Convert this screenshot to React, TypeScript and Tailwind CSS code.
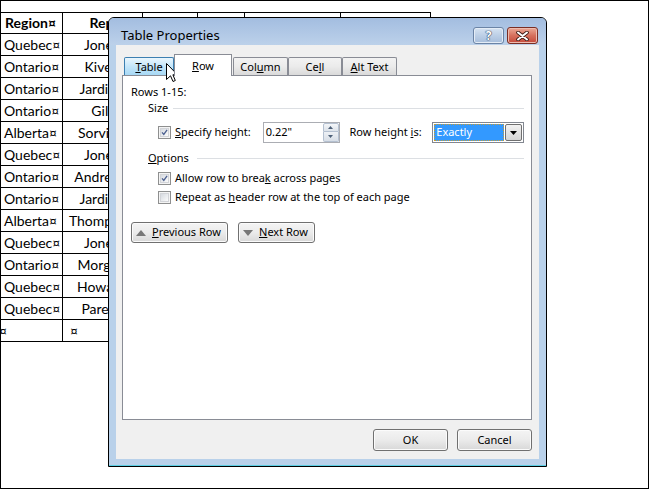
import React from "react";

const rows: [string, string][] = [
  ["Quebec", "Jones"],
  ["Ontario", "Kivell"],
  ["Ontario", "Jardine"],
  ["Ontario", "Gill"],
  ["Alberta", "Sorvino"],
  ["Quebec", "Jones"],
  ["Ontario", "Andrews"],
  ["Ontario", "Jardine"],
  ["Alberta", "Thompson"],
  ["Quebec", "Jones"],
  ["Ontario", "Morgan"],
  ["Quebec", "Howard"],
  ["Quebec", "Parent"],
];

function Check({ checked }: { checked?: boolean }) {
  return (
    <div className="flex h-[13px] w-[13px] shrink-0 items-center justify-center border border-[#8e8f8f] bg-[#f4f4f4]">
      <div className="flex h-[9px] w-[9px] items-center justify-center border border-[#d2d4d8] bg-gradient-to-br from-[#d6dae0] to-[#fbfbfb]">
        {checked && (
          <svg width="9" height="9" viewBox="0 0 9 9">
            <path d="M1.3 4.3 L3.6 6.9 L7.8 1.2" fill="none" stroke="#4b5f8f" strokeWidth="1.7" />
          </svg>
        )}
      </div>
    </div>
  );
}

const btn =
  "flex h-[21px] items-center rounded-[3px] border border-[#707070] bg-gradient-to-b from-[#f4f4f4] via-[#ebebeb] to-[#d8d8d8] shadow-[inset_0_0_0_1px_#fbfbfb]";

const tabIdle =
  "flex h-[18px] items-center justify-center rounded-t-[2px] border border-b-0 border-[#898c95] bg-gradient-to-b from-[#f3f3f3] via-[#ebebeb] to-[#dadada] pt-[1px]";

export default function App() {
  return (
    <div className="relative h-[489px] w-[649px] overflow-hidden border border-black bg-white text-black">
      {/* document table */}
      <div className="mt-[11px] w-[430px] font-['Lato',sans-serif] text-[14px] leading-none">
        <div className="flex h-[22px] border-y border-black font-bold">
          <div className="flex w-[62px] items-center border-r border-black pl-[4px]">Region¤</div>
          <div className="flex w-[80px] items-center justify-center overflow-hidden border-r border-black pl-[6px]">Rep¤</div>
          <div className="w-[55px] border-r border-black" />
          <div className="w-[47px] border-r border-black" />
          <div className="w-[96px] border-r border-black" />
          <div className="w-[90px] border-r border-black" />
        </div>
        {rows.map(([region, rep], i) => (
          <div key={i} className="flex h-[22px] border-b border-black">
            <div className="flex w-[62px] items-center border-r border-black pl-[3px]">{region}¤</div>
            <div className="flex w-[80px] items-center justify-center border-r border-black pl-[6px]">{rep}¤</div>
            <div className="w-[55px] border-r border-black" />
            <div className="w-[47px] border-r border-black" />
            <div className="w-[96px] border-r border-black" />
            <div className="w-[90px] border-r border-black" />
          </div>
        ))}
        <div className="flex h-[22px] border-b border-black">
          <div className="flex w-[62px] items-center border-r border-black">
            <span className="-ml-[2px]">¤</span>
          </div>
          <div className="flex w-[80px] items-center border-r border-black pl-[7px]">¤</div>
          <div className="w-[55px] border-r border-black" />
          <div className="w-[47px] border-r border-black" />
          <div className="w-[96px] border-r border-black" />
          <div className="w-[90px] border-r border-black" />
        </div>
      </div>

      {/* Table Properties dialog */}
      <div className="absolute left-[107px] top-[16px] flex h-[450px] w-[439px] flex-col rounded-t-[6px] border border-black bg-[#b9d1ea] font-['Noto_Sans',sans-serif] text-[11px] shadow-[inset_0_-1px_0_#5ccfe4]">
        <div className="flex h-[27px] shrink-0 items-end rounded-t-[5px] bg-gradient-to-b from-[#a3bde0] to-[#bcd1ea]">
          <div className="pb-[1px] pl-[12px] text-[13px] leading-[17px]">Table Properties</div>
          <div className="mb-[1px] ml-auto mr-[8px] flex gap-[3px]">
            <div className="flex h-[17px] w-[31px] items-center justify-center rounded-[3px] border border-[#6b84a6] bg-gradient-to-b from-[#d6e3f2] via-[#bccfe6] to-[#a6bddb] shadow-[inset_0_0_0_1px_#e4ecf6]">
              <span className="text-[12px] font-bold leading-none text-white [text-shadow:0_0_1px_#2b3f5c,0_0_1px_#2b3f5c,0_0_1px_#2b3f5c]">?</span>
            </div>
            <div className="flex h-[17px] w-[31px] items-center justify-center rounded-[3px] border border-[#7a2e24] bg-gradient-to-b from-[#e9a896] via-[#d6705d] to-[#c4473a] shadow-[inset_0_0_0_1px_#eebbae]">
              <svg width="13" height="10" viewBox="0 0 13 10">
                <path d="M2 1.5 L11 8.5 M11 1.5 L2 8.5" stroke="#3c1a14" strokeWidth="3.6" strokeLinecap="round" />
                <path d="M2 1.5 L11 8.5 M11 1.5 L2 8.5" stroke="#ffffff" strokeWidth="2" strokeLinecap="round" />
              </svg>
            </div>
          </div>
        </div>

        <div className="mx-[7px] flex h-[414px] flex-col bg-[#f0f0f0] px-[6px] pt-[9px]">
          {/* tabs */}
          <div className="flex h-[21px] items-end pl-[2px]">
            <div className="flex h-[18px] w-[50px] items-center justify-center rounded-t-[2px] border border-b-0 border-[#3c7fb1] bg-gradient-to-b from-[#eaf6fd] via-[#c4e6fa] to-[#a7d9f5] pt-[1px]">
              <span><u>T</u>able</span>
            </div>
            <div className="relative z-10 -mb-px flex h-[22px] w-[58px] justify-center border border-b-0 border-[#898c95] bg-white pt-[3px]">
              <span><u>R</u>ow</span>
            </div>
            <div className={`${tabIdle} ml-px w-[55px]`}>
              <span>Col<u>u</u>mn</span>
            </div>
            <div className={`${tabIdle} w-[54px]`}>
              <span>Ce<u>l</u>l</span>
            </div>
            <div className={`${tabIdle} w-[55px]`}>
              <span><u>A</u>lt Text</span>
            </div>
          </div>

          {/* panel */}
          <div className="flex h-[345px] w-[410px] flex-col border border-[#898c95] bg-white pl-[8px] pr-[7px] pt-[8px]">
            <div className="h-[16px] leading-[16px]">Rows 1-15:</div>
            <div className="flex h-[16px] items-center pl-[17px] leading-[16px]">
              <span>Size</span>
              <div className="ml-[5px] h-px flex-1 bg-[#dcdfe3]" />
            </div>

            <div className="mt-[6px] flex h-[21px] items-center pl-[27px]">
              <Check checked />
              <div className="w-[92px] pl-[4px]">
                <u>S</u>pecify height:
              </div>
              <div className="flex h-[21px] w-[77px] items-center border border-[#abadb3] bg-white pl-[2px]">
                <span className="flex-1">0.22"</span>
                <div className="flex h-[19px] w-[16px] flex-col">
                  <div className="flex h-[9px] items-center justify-center rounded-t-[2px] border border-[#b4c0d0] bg-gradient-to-b from-[#f4f6f9] to-[#dde3ea]">
                    <svg width="5" height="3" viewBox="0 0 5 3"><path d="M0 3 L2.5 0 L5 3 Z" fill="#4d6078" /></svg>
                  </div>
                  <div className="flex h-[10px] items-center justify-center rounded-b-[2px] border border-t-0 border-[#b4c0d0] bg-gradient-to-b from-[#eef1f5] to-[#d7dee7]">
                    <svg width="5" height="3" viewBox="0 0 5 3"><path d="M0 0 L2.5 3 L5 0 Z" fill="#4d6078" /></svg>
                  </div>
                </div>
              </div>
              <div className="ml-[10px] w-[83px]">
                Row height <u>i</u>s:
              </div>
              <div className="flex h-[21px] w-[92px] items-stretch border border-[#828790] bg-white p-px">
                <div className="flex flex-1 items-center bg-[#3399ff] pl-[2px] text-white outline-1 outline-dotted -outline-offset-1 outline-[#c89b32]">
                  Exactly
                </div>
                <div className="ml-px flex w-[17px] items-center justify-center rounded-[2px] border border-[#707070] bg-gradient-to-b from-[#f2f2f2] to-[#d4d4d4]">
                  <svg width="7" height="4" viewBox="0 0 7 4"><path d="M0 0 L7 0 L3.5 4 Z" fill="#000" /></svg>
                </div>
              </div>
            </div>

            <div className="mt-[7px] flex h-[16px] items-center pl-[17px] leading-[16px]">
              <span><u>O</u>ptions</span>
              <div className="ml-[8px] h-px flex-1 bg-[#dcdfe3]" />
            </div>

            <div className="mt-[4px] flex h-[16px] items-center pl-[27px]">
              <Check checked />
              <span className="pl-[4px]">Allow row to brea<u>k</u> across pages</span>
            </div>
            <div className="mt-[3px] flex h-[16px] items-center pl-[27px]">
              <Check />
              <span className="pl-[4px]">Repeat as <u>h</u>eader row at the top of each page</span>
            </div>

            <div className="mt-[17px] flex gap-[10px]">
              <div className={`${btn} w-[97px] gap-[6px] pl-[4px]`}>
                <svg width="10" height="6" viewBox="0 0 10 6"><path d="M0 6 L5 0 L10 6 Z" fill="#777" /></svg>
                <span><u>P</u>revious Row</span>
              </div>
              <div className={`${btn} w-[77px] gap-[6px] pl-[4px]`}>
                <svg width="10" height="6" viewBox="0 0 10 6"><path d="M0 0 L10 0 L5 6 Z" fill="#777" /></svg>
                <span><u>N</u>ext Row</span>
              </div>
            </div>
          </div>

          {/* OK / Cancel */}
          <div className="mt-[9px] flex justify-end gap-[9px] pr-px">
            <div className={`${btn} h-[22px] w-[75px] justify-center border-[#3c7fb1] shadow-[inset_0_0_0_1px_#b3dcf4]`}>OK</div>
            <div className={`${btn} h-[22px] w-[75px] justify-center`}>Cancel</div>
          </div>
        </div>
      </div>

      {/* mouse pointer */}
      <svg className="absolute left-[165px] top-[62px]" width="12" height="20" viewBox="0 0 12 20">
        <path d="M0.5 0.5 L0.5 16.5 L4.5 12.8 L7 18.5 L9.3 17.5 L6.9 11.8 L11.5 11.8 Z" fill="#fff" stroke="#000" strokeWidth="1" />
      </svg>
    </div>
  );
}
